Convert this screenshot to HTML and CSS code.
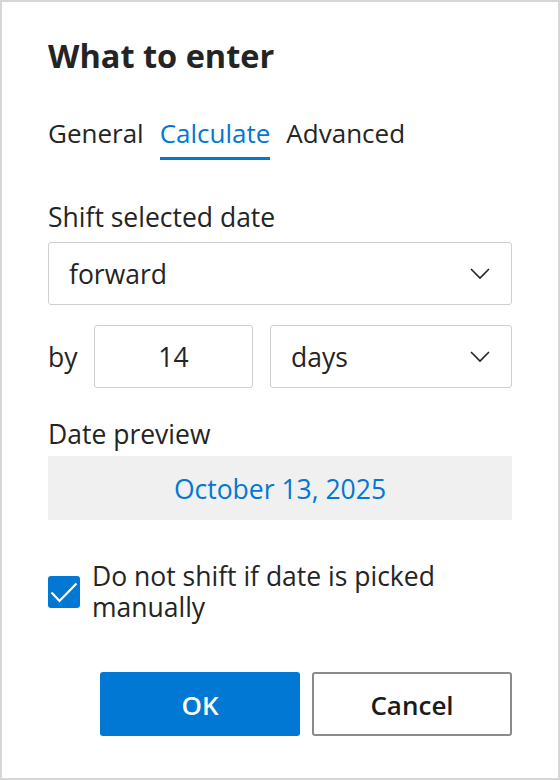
FILE: index.html
```html
<!DOCTYPE html>
<html>
<head>
<meta charset="utf-8">
<link rel="stylesheet" href="styles.css">
</head>
<body>
<div class="dialog">
  <h1 class="title">What to enter</h1>
  <div class="tabs">
    <span class="tab">General</span>
    <span class="tab active">Calculate</span>
    <span class="tab">Advanced</span>
  </div>
  <div class="label label-shift">Shift selected date</div>
  <div class="select select-full">
    <span>forward</span>
    <svg class="chev" width="20" height="12" viewBox="0 0 20 12"><path d="M1 1 L10 10 L19 1" fill="none" stroke="#242424" stroke-width="1.6"/></svg>
  </div>
  <div class="by-row">
    <span class="by">by</span>
    <div class="input">14</div>
    <div class="select select-unit">
      <span>days</span>
      <svg class="chev" width="20" height="12" viewBox="0 0 20 12"><path d="M1 1 L10 10 L19 1" fill="none" stroke="#242424" stroke-width="1.6"/></svg>
    </div>
  </div>
  <div class="label label-preview">Date preview</div>
  <div class="preview">October 13, 2025</div>
  <label class="check-row">
    <span class="checkbox"><svg width="32" height="32" viewBox="0 0 32 32"><path d="M3.5 16.5 L11.5 25 L28.5 7.5" fill="none" stroke="#fff" stroke-width="2.2"/></svg></span>
    <span class="check-text">Do not shift if date is picked manually</span>
  </label>
  <div class="buttons">
    <button class="btn btn-primary">OK</button>
    <button class="btn btn-secondary">Cancel</button>
  </div>
</div>
</body>
</html>
```
FILE: styles.css
```css
* { box-sizing: border-box; }
html, body { margin: 0; padding: 0; background: #fff; }
body { font-family: "Open Sans", "Noto Sans", sans-serif; color: #242424; }
.dialog {
  width: 560px;
  height: 780px;
  border: 2px solid #d6d6d6;
  padding: 0 46px 0 46px;
  display: flex;
  flex-direction: column;
}
.title {
  margin: 32px 0 0 0;
  font-size: 32.5px;
  font-weight: 700;
  line-height: 44px;
}
.tabs {
  display: flex;
  gap: 16px;
  margin: 37px 0 0 0;
  font-size: 26px;
  line-height: 36px;
}
.tab { padding-bottom: 9px; }
.tab.active {
  color: #0078d4;
  border-bottom: 3px solid #0078d4;
  padding-bottom: 6px;
}
.label {
  font-size: 26.5px;
  line-height: 36px;
}
.label-shift { margin-top: 39px; }
.select {
  height: 63px;
  border: 1px solid #cfcfcf;
  border-radius: 3px;
  display: flex;
  align-items: center;
  justify-content: space-between;
  padding: 1px 21px 0 20px;
  font-size: 26.5px;
}
.select-full { margin-top: 7px; }
.chev { display: block; margin-top: -1px; }
.by-row {
  display: flex;
  align-items: center;
  margin-top: 20px;
  font-size: 26.5px;
}
.by { width: 46px; padding-top: 1px; }
.input {
  width: 159px;
  height: 63px;
  border: 1px solid #cfcfcf;
  border-radius: 3px;
  display: flex;
  align-items: center;
  justify-content: center;
  padding-top: 1px;
}
.select-unit { width: 242px; margin-left: 17px; }
.label-preview { margin-top: 28px; }
.preview {
  margin-top: 4px;
  height: 64px;
  background: #f0f0f0;
  color: #0078d4;
  font-size: 26.5px;
  display: flex;
  align-items: center;
  justify-content: center;
  padding-top: 2px;
}
.check-row {
  display: flex;
  align-items: flex-start;
  margin-top: 41px;
  font-size: 26.5px;
  line-height: 31px;
}
.checkbox {
  flex: none;
  width: 32px;
  height: 32px;
  background: #0078d4;
  border-radius: 3px;
  margin-top: 15px;
  margin-right: 12px;
}
.checkbox svg { display: block; }
.buttons {
  display: flex;
  justify-content: flex-end;
  gap: 12px;
  margin-top: 49px;
}
.btn {
  width: 200px;
  height: 64px;
  font-family: "Open Sans", "Noto Sans", sans-serif;
  font-size: 26px;
  font-weight: 600;
  border-radius: 3px;
  cursor: pointer;
  padding-top: 2px;
}
.btn-primary { background: #0078d4; color: #fff; border: none; }
.btn-secondary { background: #fff; color: #1b1b1b; border: 2px solid #8a8a8a; }
```
